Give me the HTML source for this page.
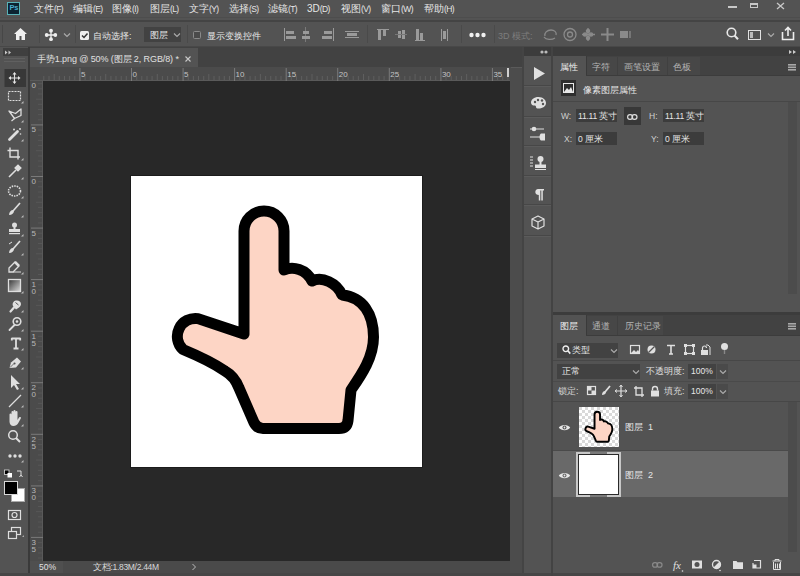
<!DOCTYPE html>
<html><head><meta charset="utf-8">
<style>
*{margin:0;padding:0;box-sizing:border-box}
html,body{width:800px;height:576px;overflow:hidden;background:#535353;font-family:"Liberation Sans",sans-serif;color:#e8e8e8}
.a{position:absolute}
.m{font-size:10.5px;line-height:13px;color:#e8e8e8}
.k{font-size:8.5px;letter-spacing:-0.6px;position:relative;top:-0.5px}
.t{position:absolute;white-space:nowrap;font-size:10px;line-height:12px;color:#e6e6e6}
</style></head><body>
<!-- menu bar -->
<div class="a" style="left:0;top:0;width:800px;height:18px;background:#535353"></div>
<div class="a" style="left:0;top:17px;width:800px;height:1px;background:#4d4d4d"></div>
<div class="a" style="left:0;top:20px;width:800px;height:2px;background:#444"></div>
<!-- menu content -->
<div class="a" style="left:7px;top:2px;width:13px;height:12.5px;background:#0c2331;border:1.5px solid #58b2b8"></div>
<div class="t" style="left:9.5px;top:2.5px;font-size:7.5px;line-height:10px;font-weight:bold;color:#4aaed0;letter-spacing:-0.3px">Ps</div>
<div class="t m" style="left:34px;top:3px">文件<span class="k">(F)</span></div>
<div class="t m" style="left:73px;top:3px">编辑<span class="k">(E)</span></div>
<div class="t m" style="left:112px;top:3px">图像<span class="k">(I)</span></div>
<div class="t m" style="left:150px;top:3px">图层<span class="k">(L)</span></div>
<div class="t m" style="left:189px;top:3px">文字<span class="k">(Y)</span></div>
<div class="t m" style="left:229px;top:3px">选择<span class="k">(S)</span></div>
<div class="t m" style="left:268px;top:3px">滤镜<span class="k">(T)</span></div>
<div class="t m" style="left:307px;top:3px"><span style="font-size:10px">3D</span><span class="k">(D)</span></div>
<div class="t m" style="left:341px;top:3px">视图<span class="k">(V)</span></div>
<div class="t m" style="left:381px;top:3px">窗口<span class="k">(W)</span></div>
<div class="t m" style="left:424px;top:3px">帮助<span class="k">(H)</span></div>
<div class="a" style="left:728px;top:6px;width:9px;height:2px;background:#c8c8c8"></div>
<div class="a" style="left:750px;top:2.5px;width:8px;height:5.5px;border:1.3px solid #c8c8c8;border-top-width:2px"></div>
<svg class="a" style="left:776px;top:1.5px" width="9" height="8"><path d="M1 1L8 7M8 1L1 7" stroke="#c8c8c8" stroke-width="1.3"/></svg>
<!-- options bar -->
<div class="a" style="left:0;top:22px;width:800px;height:24px;background:#535353"></div>
<div class="a" style="left:0;top:46px;width:800px;height:1px;background:#484848"></div>
<!-- options content -->
<div class="a" style="left:2px;top:25px;width:1px;height:18px;background:#474747"></div>
<svg class="a" style="left:13px;top:27px" width="16" height="14"><path d="M7.5 1L1 7h2v6h3.5v-4h2v4H12V7h2z" fill="#f0f0f0"/></svg>
<div class="a" style="left:39px;top:25px;width:1px;height:18px;background:#4a4a4a"></div>
<svg class="a" style="left:44px;top:27.5px" width="14" height="14"><path d="M7 3v8M3 7h8" stroke="#eee" stroke-width="1.3"/><circle cx="7" cy="2.7" r="1.9" fill="#eee"/><circle cx="7" cy="11.2" r="1.9" fill="#eee"/><circle cx="2.7" cy="7" r="1.9" fill="#eee"/><circle cx="11.3" cy="7" r="1.9" fill="#eee"/></svg>
<svg class="a" style="left:63px;top:32px" width="8" height="6"><path d="M1 1.5l3 3 3-3" stroke="#aaa" stroke-width="1.2" fill="none"/></svg>
<div class="a" style="left:75px;top:25px;width:1px;height:18px;background:#4a4a4a"></div>
<div class="a" style="left:80px;top:31px;width:9px;height:9px;background:#eee;border-radius:1.5px"></div>
<svg class="a" style="left:80px;top:31px" width="9" height="9"><path d="M2 4.5l2 2 3.5-4" stroke="#333" stroke-width="1.5" fill="none"/></svg>
<div class="t" style="left:93px;top:30px;font-size:9px;line-height:12px">自动选择:</div>
<div class="a" style="left:144px;top:27px;width:37px;height:15px;background:#424242"></div>
<div class="t" style="left:150px;top:29px;font-size:9px;line-height:12px">图层</div>
<svg class="a" style="left:173px;top:32px" width="8" height="6"><path d="M1 1.5l3 3 3-3" stroke="#aaa" stroke-width="1.2" fill="none"/></svg>
<div class="a" style="left:187px;top:25px;width:1px;height:18px;background:#4a4a4a"></div>
<div class="a" style="left:193px;top:31px;width:8px;height:8px;border:1px solid #8a8a8a;border-radius:1.5px;background:#4a4a4a"></div>
<div class="t" style="left:207px;top:30px;font-size:9px;line-height:12px">显示变换控件</div>
<svg class="a" style="left:282px;top:27px" width="110" height="15" fill="#9a9a9a">
<rect x="2" y="1" width="1" height="13"/><rect x="4" y="4" width="8" height="3"/><rect x="4" y="9" width="10" height="3"/>
<rect x="23" y="0" width="1" height="15" fill="#7a7a7a"/><rect x="21" y="4" width="6" height="3"/><rect x="20" y="9" width="8" height="3"/>
<rect x="51" y="1" width="1" height="13"/><rect x="42" y="4" width="8" height="3"/><rect x="40" y="9" width="10" height="3"/>
<rect x="63" y="4" width="14" height="1"/><rect x="65" y="6" width="10" height="3"/><rect x="63" y="10" width="14" height="1"/>
<rect x="95" y="2" width="12" height="1"/><rect x="96" y="3" width="3" height="10"/><rect x="101" y="3" width="3" height="6"/>
</svg>
<div class="a" style="left:367px;top:25px;width:1px;height:18px;background:#4a4a4a"></div>
<svg class="a" style="left:395px;top:27px" width="60" height="15" fill="#9a9a9a">
<rect x="3" y="4" width="3" height="7"/><rect x="7" y="3" width="3" height="9"/><rect x="0" y="7" width="12" height="1" fill="#777"/>
<rect x="21" y="2" width="3" height="11"/><rect x="25" y="6" width="3" height="7"/><rect x="20" y="13" width="10" height="1"/>
<rect x="46" y="2" width="1" height="12"/><rect x="52" y="2" width="1" height="12"/><rect x="48" y="4" width="3" height="8"/>
</svg>
<div class="a" style="left:461px;top:25px;width:1px;height:18px;background:#4a4a4a"></div>
<svg class="a" style="left:469px;top:32px" width="17" height="6" fill="#f0f0f0"><circle cx="2.5" cy="3" r="2.2"/><circle cx="8.5" cy="3" r="2.2"/><circle cx="14.5" cy="3" r="2.2"/></svg>
<div class="a" style="left:494px;top:25px;width:1px;height:18px;background:#4a4a4a"></div>
<div class="t" style="left:498px;top:30px;font-size:9px;line-height:12px;color:#7d7d7d">3D 模式:</div>
<svg class="a" style="left:542px;top:27px" width="95" height="15" fill="none" stroke="#8a8a8a" stroke-width="1.3">
<path d="M3 9c-1-3 2-6 6-6 3 0 6 2 5 5M2 10c2 3 8 3 11 1"/>
<circle cx="28" cy="7.5" r="6"/><circle cx="28" cy="7.5" r="2.5"/>
<path d="M46 1v13M40 7.5h13"/><circle cx="46" cy="4" r="1.6" fill="#8a8a8a"/><circle cx="46" cy="11" r="1.6" fill="#8a8a8a"/><circle cx="43" cy="7.5" r="1.6" fill="#8a8a8a"/><circle cx="49" cy="7.5" r="1.6" fill="#8a8a8a"/>
<path d="M59 7.5h13M65.5 1v13" stroke-width="2"/>
<rect x="78" y="4" width="8" height="7" fill="#8a8a8a" stroke="none"/><path d="M88 4v7"/>
</svg>
<svg class="a" style="left:726px;top:27px" width="13" height="14"><circle cx="5.5" cy="5.5" r="4.3" stroke="#e8e8e8" stroke-width="1.6" fill="none"/><path d="M8.5 8.5l3.5 3.7" stroke="#e8e8e8" stroke-width="2"/></svg>
<div class="a" style="left:748px;top:30px;width:13px;height:10px;border:1.5px solid #e0e0e0"></div>
<div class="a" style="left:750px;top:32px;width:3px;height:6px;background:#bbb"></div>
<svg class="a" style="left:767px;top:32px" width="8" height="6"><path d="M1 1.5l3 3 3-3" stroke="#aaa" stroke-width="1.2" fill="none"/></svg>
<svg class="a" style="left:781px;top:26px" width="14" height="15"><path d="M1.5 6v7.5h11V6" stroke="#eee" stroke-width="1.6" fill="none"/><path d="M7 10V2M4 4.5L7 1.5l3 3" stroke="#eee" stroke-width="1.6" fill="none"/></svg>
<!-- dark strip / tab bar -->
<div class="a" style="left:0;top:47px;width:800px;height:9px;background:#3c3c3c"></div>
<!-- toolbar -->
<div class="a" style="left:0;top:47px;width:29px;height:529px;background:#535353"></div>
<div class="a" style="left:3px;top:48px;width:25px;height:8px;background:#3f3f3f"></div>
<svg class="a" style="left:0;top:47px" width="28" height="529">
<g transform="translate(0,-47)" fill="none" stroke="#dedede" stroke-width="1.2">
<path d="M5 50.5l2.5 2-2.5 2zM8.5 50.5l2.5 2-2.5 2z" fill="#c8c8c8" stroke="none"/>
<rect x="4" y="58" width="21" height="1" fill="#606060" stroke="none"/>
<rect x="4" y="61" width="21" height="1" fill="#606060" stroke="none"/>
<rect x="4.5" y="69" width="21.5" height="18" fill="#383838" stroke="none"/>
<!-- move -->
<path d="M14.5 74v8M10.5 78h8" stroke-width="1.1"/>
<path d="M14.5 72l2 2.5h-4zM14.5 84l2-2.5h-4zM8.5 78l2.5 2v-4zM20.5 78l-2.5 2v-4z" fill="#e8e8e8" stroke="none"/>
<!-- marquee -->
<rect x="8.5" y="91.5" width="12" height="9" stroke-dasharray="2 1"/>
<!-- lasso -->
<path d="M9 111l6.5 2.5 5.5-4.5v6.5l-6.5 3-5.5-7.5z" stroke-width="1.3" stroke-linejoin="round"/><path d="M14.5 118.5l-3 2.5" stroke-width="1.2"/>
<!-- wand -->
<path d="M9.5 139.5l8-8" stroke-width="2.8" stroke-linecap="round"/><circle cx="14" cy="129.5" r="1" fill="#dedede" stroke="none"/><circle cx="20" cy="129" r="1" fill="#dedede" stroke="none"/><circle cx="20.5" cy="134" r="0.8" fill="#dedede" stroke="none"/>
<!-- crop -->
<path d="M10 147.5v9.5h10M7.5 150.5h10.5v9" stroke-width="1.4"/>
<!-- eyedropper -->
<path d="M9 177l7-7" stroke-width="1.6"/><path d="M15 168l3-3 3 3-3 3z" fill="#dedede"/>
<!-- healing -->
<ellipse cx="14.5" cy="191" rx="6" ry="5" stroke-width="1.6" stroke-dasharray="1.5 1"/>
<!-- brush -->
<path d="M20 203l-7 8" stroke-width="1.6"/><path d="M13 210c-2 0-4 2-4 5 3 0 5-2 5-4z" fill="#dedede" stroke="none"/>
<!-- stamp -->
<circle cx="14.5" cy="225" r="2.5" fill="#dedede" stroke="none"/><rect x="13.5" y="226" width="2" height="4" fill="#dedede" stroke="none"/><rect x="9" y="229" width="11" height="3" fill="#dedede" stroke="none"/><rect x="9" y="233" width="11" height="1.2" fill="#dedede" stroke="none"/>
<!-- history brush -->
<path d="M20 241l-7 8" stroke-width="1.6"/><path d="M13 248c-2 0-4 2-4 5 3 0 5-2 5-4z" fill="#dedede" stroke="none"/><path d="M9 244l3-2" stroke-width="1"/>
<!-- eraser -->
<path d="M9 268l6-6 4 4-6 6h-4z" stroke-width="1.3"/><path d="M15 262l4 4" stroke-width="2.5"/><path d="M13 272h8" stroke-width="1"/>
<!-- gradient -->
<defs><linearGradient id="gg" x1="0" x2="1" y1="0" y2="1"><stop offset="0" stop-color="#333"/><stop offset="1" stop-color="#ddd"/></linearGradient></defs>
<rect x="8.5" y="279.5" width="12" height="12" fill="url(#gg)" stroke-width="1.3"/>
<!-- smudge -->
<path d="M10.5 311.5l3.5-4" stroke-width="2.2" stroke-linecap="round"/><path d="M13 306c-1-2 0-5 3-5.5 2.5-.5 5 1 5 3.5 0 1.5-1 2.5-2 3.5l-3 2z" fill="#dedede" stroke="none"/><path d="M15.5 302.5l3 2.5" stroke="#535353" stroke-width="1"/>
<!-- dodge -->
<circle cx="17" cy="321.5" r="3.8" stroke-width="1.6"/><circle cx="17" cy="321.5" r="1.3" fill="#dedede" stroke="none"/><path d="M9.5 330l5-5" stroke-width="1.8" stroke-linecap="round"/>
<!-- type -->
<path d="M11.5 338.5h9M16 338.5v10M13.5 348.5h5M11.8 338v2.5M20.2 338v2.5" stroke-width="1.8"/>
<!-- pen -->
<path d="M9.5 368l1.5-5.5 6-5 4 4-5 6z" fill="#dedede" stroke="none"/><circle cx="14.5" cy="363.5" r="1.1" fill="#535353" stroke="none"/><path d="M10 367.5l3.5-3.5" stroke="#535353" stroke-width="0.8"/>
<!-- path select -->
<path d="M11 375v13l3-3 3 5 2-1-3-5h4z" fill="#dedede" stroke="none"/>
<!-- line -->
<path d="M9 407l12-12" stroke-width="1.3"/>
<!-- hand -->
<path d="M9.5 419v-4.5a1 1 0 0 1 2 0V418V412a1 1 0 0 1 2 0v6v-7a1 1 0 0 1 2 0v7v-6a1 1 0 0 1 2 0v8l1.5-2.5a1 1 0 0 1 1.8 1l-2.8 5c-1 1.5-2.5 2.5-4.5 2.5c-2.5 0-4-2-4-4.5z" fill="#dedede" stroke="none"/>
<!-- zoom -->
<circle cx="13" cy="435" r="4.3" stroke-width="1.5"/><path d="M16 438l4 4" stroke-width="2"/>
<!-- more -->
<circle cx="10" cy="456" r="1.7" fill="#dedede" stroke="none"/><circle cx="15" cy="456" r="1.7" fill="#dedede" stroke="none"/><circle cx="20" cy="456" r="1.7" fill="#dedede" stroke="none"/>
<path d="M23.5 101v2.5h-2.5z" fill="#bdbdbd" stroke="none"/><path d="M23.5 120v2.5h-2.5z" fill="#bdbdbd" stroke="none"/><path d="M23.5 139v2.5h-2.5z" fill="#bdbdbd" stroke="none"/><path d="M23.5 158v2.5h-2.5z" fill="#bdbdbd" stroke="none"/><path d="M23.5 177v2.5h-2.5z" fill="#bdbdbd" stroke="none"/><path d="M23.5 196v2.5h-2.5z" fill="#bdbdbd" stroke="none"/><path d="M23.5 215v2.5h-2.5z" fill="#bdbdbd" stroke="none"/><path d="M23.5 234v2.5h-2.5z" fill="#bdbdbd" stroke="none"/><path d="M23.5 253v2.5h-2.5z" fill="#bdbdbd" stroke="none"/><path d="M23.5 272v2.5h-2.5z" fill="#bdbdbd" stroke="none"/><path d="M23.5 291v2.5h-2.5z" fill="#bdbdbd" stroke="none"/><path d="M23.5 310v2.5h-2.5z" fill="#bdbdbd" stroke="none"/><path d="M23.5 329v2.5h-2.5z" fill="#bdbdbd" stroke="none"/><path d="M23.5 348v2.5h-2.5z" fill="#bdbdbd" stroke="none"/><path d="M23.5 367v2.5h-2.5z" fill="#bdbdbd" stroke="none"/><path d="M23.5 387v2.5h-2.5z" fill="#bdbdbd" stroke="none"/><path d="M23.5 405v2.5h-2.5z" fill="#bdbdbd" stroke="none"/><path d="M23.5 424v2.5h-2.5z" fill="#bdbdbd" stroke="none"/><path d="M23.5 460v2.5h-2.5z" fill="#bdbdbd" stroke="none"/>
<!-- default colours -->
<rect x="4.5" y="470" width="4.5" height="4.5" fill="#000" stroke="#ddd" stroke-width="0.8"/><rect x="7.5" y="473" width="4.5" height="4.5" fill="#fff" stroke="none"/>
<path d="M17 471h4v4M19.5 477l1.5-2 1.5 2" stroke-width="1"/>
</g></svg>
<div class="a" style="left:11px;top:488px;width:14px;height:14px;background:#fff;border:1px solid #aaa"></div>
<div class="a" style="left:4px;top:481px;width:14px;height:14px;background:#000;border:1.5px solid #d8d8d8"></div>
<svg class="a" style="left:0;top:505px" width="28" height="40" fill="none" stroke="#dedede" stroke-width="1.2">
<rect x="8.5" y="5.5" width="12" height="9"/><circle cx="14.5" cy="10" r="2.5"/>
<rect x="11.5" y="22.5" width="9" height="7"/><rect x="8.5" y="26.5" width="8" height="7" fill="#535353"/>
<path d="M24 30l-2 2h2z" fill="#aaa" stroke="none"/>
</svg>

<div class="a" style="left:28px;top:47px;width:2px;height:529px;background:#3a3a3a"></div>
<!-- document tab bar -->
<div class="a" style="left:30px;top:47px;width:493px;height:20px;background:#424242"></div>
<div class="a" style="left:30px;top:48px;width:168px;height:20px;background:#535353"></div>
<div class="t" id="tabtxt" style="left:37px;top:53px;font-size:9px;line-height:12px;color:#e0e0e0;letter-spacing:-0.1px">手势1.png @ 50% (图层 2, RGB/8) *</div>
<svg class="a" style="left:184px;top:55px" width="8" height="8"><path d="M1.5 1.5l5 5M6.5 1.5l-5 5" stroke="#c8c8c8" stroke-width="1.1"/></svg>
<!-- rulers -->
<svg class="a" style="left:30px;top:67px" width="481" height="14">
<rect x="0" y="0" width="481" height="14" fill="#4b4b4b"/>
<rect x="0" y="13" width="481" height="1" fill="#5a5a5a"/>
<rect x="13.3" y="9" width="1" height="4" fill="#5f5f5f"/>
<rect x="18.5" y="9" width="1" height="4" fill="#5f5f5f"/>
<rect x="23.7" y="7" width="1" height="6" fill="#5f5f5f"/>
<rect x="28.8" y="9" width="1" height="4" fill="#5f5f5f"/>
<rect x="34.0" y="9" width="1" height="4" fill="#5f5f5f"/>
<rect x="39.1" y="9" width="1" height="4" fill="#5f5f5f"/>
<rect x="44.3" y="9" width="1" height="4" fill="#5f5f5f"/>
<rect x="49.4" y="1" width="1" height="13" fill="#7a7a7a"/>
<text x="50.9" y="10" font-size="8" fill="#c4c4c4" font-family="Liberation Sans">5</text>
<rect x="54.6" y="9" width="1" height="4" fill="#5f5f5f"/>
<rect x="59.8" y="9" width="1" height="4" fill="#5f5f5f"/>
<rect x="64.9" y="9" width="1" height="4" fill="#5f5f5f"/>
<rect x="70.1" y="9" width="1" height="4" fill="#5f5f5f"/>
<rect x="75.2" y="7" width="1" height="6" fill="#5f5f5f"/>
<rect x="80.4" y="9" width="1" height="4" fill="#5f5f5f"/>
<rect x="85.5" y="9" width="1" height="4" fill="#5f5f5f"/>
<rect x="90.7" y="9" width="1" height="4" fill="#5f5f5f"/>
<rect x="95.8" y="9" width="1" height="4" fill="#5f5f5f"/>
<rect x="101.0" y="1" width="1" height="13" fill="#7a7a7a"/>
<text x="102.5" y="10" font-size="8" fill="#c4c4c4" font-family="Liberation Sans">0</text>
<rect x="106.2" y="9" width="1" height="4" fill="#5f5f5f"/>
<rect x="111.3" y="9" width="1" height="4" fill="#5f5f5f"/>
<rect x="116.5" y="9" width="1" height="4" fill="#5f5f5f"/>
<rect x="121.6" y="9" width="1" height="4" fill="#5f5f5f"/>
<rect x="126.8" y="7" width="1" height="6" fill="#5f5f5f"/>
<rect x="131.9" y="9" width="1" height="4" fill="#5f5f5f"/>
<rect x="137.1" y="9" width="1" height="4" fill="#5f5f5f"/>
<rect x="142.2" y="9" width="1" height="4" fill="#5f5f5f"/>
<rect x="147.4" y="9" width="1" height="4" fill="#5f5f5f"/>
<rect x="152.6" y="1" width="1" height="13" fill="#7a7a7a"/>
<text x="154.1" y="10" font-size="8" fill="#c4c4c4" font-family="Liberation Sans">5</text>
<rect x="157.7" y="9" width="1" height="4" fill="#5f5f5f"/>
<rect x="162.9" y="9" width="1" height="4" fill="#5f5f5f"/>
<rect x="168.0" y="9" width="1" height="4" fill="#5f5f5f"/>
<rect x="173.2" y="9" width="1" height="4" fill="#5f5f5f"/>
<rect x="178.3" y="7" width="1" height="6" fill="#5f5f5f"/>
<rect x="183.5" y="9" width="1" height="4" fill="#5f5f5f"/>
<rect x="188.7" y="9" width="1" height="4" fill="#5f5f5f"/>
<rect x="193.8" y="9" width="1" height="4" fill="#5f5f5f"/>
<rect x="199.0" y="9" width="1" height="4" fill="#5f5f5f"/>
<rect x="204.1" y="1" width="1" height="13" fill="#7a7a7a"/>
<text x="205.6" y="10" font-size="8" fill="#c4c4c4" font-family="Liberation Sans">10</text>
<rect x="209.3" y="9" width="1" height="4" fill="#5f5f5f"/>
<rect x="214.4" y="9" width="1" height="4" fill="#5f5f5f"/>
<rect x="219.6" y="9" width="1" height="4" fill="#5f5f5f"/>
<rect x="224.7" y="9" width="1" height="4" fill="#5f5f5f"/>
<rect x="229.9" y="7" width="1" height="6" fill="#5f5f5f"/>
<rect x="235.1" y="9" width="1" height="4" fill="#5f5f5f"/>
<rect x="240.2" y="9" width="1" height="4" fill="#5f5f5f"/>
<rect x="245.4" y="9" width="1" height="4" fill="#5f5f5f"/>
<rect x="250.5" y="9" width="1" height="4" fill="#5f5f5f"/>
<rect x="255.7" y="1" width="1" height="13" fill="#7a7a7a"/>
<text x="257.2" y="10" font-size="8" fill="#c4c4c4" font-family="Liberation Sans">15</text>
<rect x="260.8" y="9" width="1" height="4" fill="#5f5f5f"/>
<rect x="266.0" y="9" width="1" height="4" fill="#5f5f5f"/>
<rect x="271.1" y="9" width="1" height="4" fill="#5f5f5f"/>
<rect x="276.3" y="9" width="1" height="4" fill="#5f5f5f"/>
<rect x="281.5" y="7" width="1" height="6" fill="#5f5f5f"/>
<rect x="286.6" y="9" width="1" height="4" fill="#5f5f5f"/>
<rect x="291.8" y="9" width="1" height="4" fill="#5f5f5f"/>
<rect x="296.9" y="9" width="1" height="4" fill="#5f5f5f"/>
<rect x="302.1" y="9" width="1" height="4" fill="#5f5f5f"/>
<rect x="307.2" y="1" width="1" height="13" fill="#7a7a7a"/>
<text x="308.7" y="10" font-size="8" fill="#c4c4c4" font-family="Liberation Sans">20</text>
<rect x="312.4" y="9" width="1" height="4" fill="#5f5f5f"/>
<rect x="317.6" y="9" width="1" height="4" fill="#5f5f5f"/>
<rect x="322.7" y="9" width="1" height="4" fill="#5f5f5f"/>
<rect x="327.9" y="9" width="1" height="4" fill="#5f5f5f"/>
<rect x="333.0" y="7" width="1" height="6" fill="#5f5f5f"/>
<rect x="338.2" y="9" width="1" height="4" fill="#5f5f5f"/>
<rect x="343.3" y="9" width="1" height="4" fill="#5f5f5f"/>
<rect x="348.5" y="9" width="1" height="4" fill="#5f5f5f"/>
<rect x="353.6" y="9" width="1" height="4" fill="#5f5f5f"/>
<rect x="358.8" y="1" width="1" height="13" fill="#7a7a7a"/>
<text x="360.3" y="10" font-size="8" fill="#c4c4c4" font-family="Liberation Sans">25</text>
<rect x="364.0" y="9" width="1" height="4" fill="#5f5f5f"/>
<rect x="369.1" y="9" width="1" height="4" fill="#5f5f5f"/>
<rect x="374.3" y="9" width="1" height="4" fill="#5f5f5f"/>
<rect x="379.4" y="9" width="1" height="4" fill="#5f5f5f"/>
<rect x="384.6" y="7" width="1" height="6" fill="#5f5f5f"/>
<rect x="389.7" y="9" width="1" height="4" fill="#5f5f5f"/>
<rect x="394.9" y="9" width="1" height="4" fill="#5f5f5f"/>
<rect x="400.0" y="9" width="1" height="4" fill="#5f5f5f"/>
<rect x="405.2" y="9" width="1" height="4" fill="#5f5f5f"/>
<rect x="410.4" y="1" width="1" height="13" fill="#7a7a7a"/>
<text x="411.9" y="10" font-size="8" fill="#c4c4c4" font-family="Liberation Sans">30</text>
<rect x="415.5" y="9" width="1" height="4" fill="#5f5f5f"/>
<rect x="420.7" y="9" width="1" height="4" fill="#5f5f5f"/>
<rect x="425.8" y="9" width="1" height="4" fill="#5f5f5f"/>
<rect x="431.0" y="9" width="1" height="4" fill="#5f5f5f"/>
<rect x="436.1" y="7" width="1" height="6" fill="#5f5f5f"/>
<rect x="441.3" y="9" width="1" height="4" fill="#5f5f5f"/>
<rect x="446.5" y="9" width="1" height="4" fill="#5f5f5f"/>
<rect x="451.6" y="9" width="1" height="4" fill="#5f5f5f"/>
<rect x="456.8" y="9" width="1" height="4" fill="#5f5f5f"/>
<rect x="461.9" y="1" width="1" height="13" fill="#7a7a7a"/>
<text x="463.4" y="10" font-size="8" fill="#c4c4c4" font-family="Liberation Sans">35</text>
<rect x="467.1" y="9" width="1" height="4" fill="#5f5f5f"/>
<rect x="472.2" y="9" width="1" height="4" fill="#5f5f5f"/>
<rect x="477.4" y="9" width="1" height="4" fill="#5f5f5f"/>
<rect x="477" y="1" width="2" height="9" fill="#d0d0d0"/>
</svg>
<svg class="a" style="left:30px;top:81px" width="13" height="480">
<rect x="0" y="0" width="13" height="480" fill="#4b4b4b"/>
<rect x="12" y="0" width="1" height="480" fill="#5a5a5a"/>
<text x="1.5" y="-0.1" font-size="8" fill="#b8b8b8" font-family="Liberation Sans">1</text>
<text x="1.5" y="6.9" font-size="8" fill="#b8b8b8" font-family="Liberation Sans">0</text>
<rect x="8" y="2.2" width="4" height="1" fill="#575757"/>
<rect x="8" y="7.3" width="4" height="1" fill="#575757"/>
<rect x="8" y="12.5" width="4" height="1" fill="#575757"/>
<rect x="6" y="17.7" width="6" height="1" fill="#575757"/>
<rect x="8" y="22.8" width="4" height="1" fill="#575757"/>
<rect x="8" y="28.0" width="4" height="1" fill="#575757"/>
<rect x="8" y="33.1" width="4" height="1" fill="#575757"/>
<rect x="8" y="38.3" width="4" height="1" fill="#575757"/>
<rect x="1" y="43.4" width="12" height="1" fill="#7a7a7a"/>
<text x="1.5" y="51.4" font-size="8" fill="#b8b8b8" font-family="Liberation Sans">5</text>
<rect x="8" y="48.6" width="4" height="1" fill="#575757"/>
<rect x="8" y="53.8" width="4" height="1" fill="#575757"/>
<rect x="8" y="58.9" width="4" height="1" fill="#575757"/>
<rect x="8" y="64.1" width="4" height="1" fill="#575757"/>
<rect x="6" y="69.2" width="6" height="1" fill="#575757"/>
<rect x="8" y="74.4" width="4" height="1" fill="#575757"/>
<rect x="8" y="79.5" width="4" height="1" fill="#575757"/>
<rect x="8" y="84.7" width="4" height="1" fill="#575757"/>
<rect x="8" y="89.8" width="4" height="1" fill="#575757"/>
<rect x="1" y="95.0" width="12" height="1" fill="#7a7a7a"/>
<text x="1.5" y="103.0" font-size="8" fill="#b8b8b8" font-family="Liberation Sans">0</text>
<rect x="8" y="100.2" width="4" height="1" fill="#575757"/>
<rect x="8" y="105.3" width="4" height="1" fill="#575757"/>
<rect x="8" y="110.5" width="4" height="1" fill="#575757"/>
<rect x="8" y="115.6" width="4" height="1" fill="#575757"/>
<rect x="6" y="120.8" width="6" height="1" fill="#575757"/>
<rect x="8" y="125.9" width="4" height="1" fill="#575757"/>
<rect x="8" y="131.1" width="4" height="1" fill="#575757"/>
<rect x="8" y="136.2" width="4" height="1" fill="#575757"/>
<rect x="8" y="141.4" width="4" height="1" fill="#575757"/>
<rect x="1" y="146.6" width="12" height="1" fill="#7a7a7a"/>
<text x="1.5" y="154.6" font-size="8" fill="#b8b8b8" font-family="Liberation Sans">5</text>
<rect x="8" y="151.7" width="4" height="1" fill="#575757"/>
<rect x="8" y="156.9" width="4" height="1" fill="#575757"/>
<rect x="8" y="162.0" width="4" height="1" fill="#575757"/>
<rect x="8" y="167.2" width="4" height="1" fill="#575757"/>
<rect x="6" y="172.3" width="6" height="1" fill="#575757"/>
<rect x="8" y="177.5" width="4" height="1" fill="#575757"/>
<rect x="8" y="182.7" width="4" height="1" fill="#575757"/>
<rect x="8" y="187.8" width="4" height="1" fill="#575757"/>
<rect x="8" y="193.0" width="4" height="1" fill="#575757"/>
<rect x="1" y="198.1" width="12" height="1" fill="#7a7a7a"/>
<text x="1.5" y="206.1" font-size="8" fill="#b8b8b8" font-family="Liberation Sans">1</text>
<text x="1.5" y="213.1" font-size="8" fill="#b8b8b8" font-family="Liberation Sans">0</text>
<rect x="8" y="203.3" width="4" height="1" fill="#575757"/>
<rect x="8" y="208.4" width="4" height="1" fill="#575757"/>
<rect x="8" y="213.6" width="4" height="1" fill="#575757"/>
<rect x="8" y="218.7" width="4" height="1" fill="#575757"/>
<rect x="6" y="223.9" width="6" height="1" fill="#575757"/>
<rect x="8" y="229.1" width="4" height="1" fill="#575757"/>
<rect x="8" y="234.2" width="4" height="1" fill="#575757"/>
<rect x="8" y="239.4" width="4" height="1" fill="#575757"/>
<rect x="8" y="244.5" width="4" height="1" fill="#575757"/>
<rect x="1" y="249.7" width="12" height="1" fill="#7a7a7a"/>
<text x="1.5" y="257.7" font-size="8" fill="#b8b8b8" font-family="Liberation Sans">1</text>
<text x="1.5" y="264.7" font-size="8" fill="#b8b8b8" font-family="Liberation Sans">5</text>
<rect x="8" y="254.8" width="4" height="1" fill="#575757"/>
<rect x="8" y="260.0" width="4" height="1" fill="#575757"/>
<rect x="8" y="265.1" width="4" height="1" fill="#575757"/>
<rect x="8" y="270.3" width="4" height="1" fill="#575757"/>
<rect x="6" y="275.5" width="6" height="1" fill="#575757"/>
<rect x="8" y="280.6" width="4" height="1" fill="#575757"/>
<rect x="8" y="285.8" width="4" height="1" fill="#575757"/>
<rect x="8" y="290.9" width="4" height="1" fill="#575757"/>
<rect x="8" y="296.1" width="4" height="1" fill="#575757"/>
<rect x="1" y="301.2" width="12" height="1" fill="#7a7a7a"/>
<text x="1.5" y="309.2" font-size="8" fill="#b8b8b8" font-family="Liberation Sans">2</text>
<text x="1.5" y="316.2" font-size="8" fill="#b8b8b8" font-family="Liberation Sans">0</text>
<rect x="8" y="306.4" width="4" height="1" fill="#575757"/>
<rect x="8" y="311.6" width="4" height="1" fill="#575757"/>
<rect x="8" y="316.7" width="4" height="1" fill="#575757"/>
<rect x="8" y="321.9" width="4" height="1" fill="#575757"/>
<rect x="6" y="327.0" width="6" height="1" fill="#575757"/>
<rect x="8" y="332.2" width="4" height="1" fill="#575757"/>
<rect x="8" y="337.3" width="4" height="1" fill="#575757"/>
<rect x="8" y="342.5" width="4" height="1" fill="#575757"/>
<rect x="8" y="347.6" width="4" height="1" fill="#575757"/>
<rect x="1" y="352.8" width="12" height="1" fill="#7a7a7a"/>
<text x="1.5" y="360.8" font-size="8" fill="#b8b8b8" font-family="Liberation Sans">2</text>
<text x="1.5" y="367.8" font-size="8" fill="#b8b8b8" font-family="Liberation Sans">5</text>
<rect x="8" y="358.0" width="4" height="1" fill="#575757"/>
<rect x="8" y="363.1" width="4" height="1" fill="#575757"/>
<rect x="8" y="368.3" width="4" height="1" fill="#575757"/>
<rect x="8" y="373.4" width="4" height="1" fill="#575757"/>
<rect x="6" y="378.6" width="6" height="1" fill="#575757"/>
<rect x="8" y="383.7" width="4" height="1" fill="#575757"/>
<rect x="8" y="388.9" width="4" height="1" fill="#575757"/>
<rect x="8" y="394.0" width="4" height="1" fill="#575757"/>
<rect x="8" y="399.2" width="4" height="1" fill="#575757"/>
<rect x="1" y="404.4" width="12" height="1" fill="#7a7a7a"/>
<text x="1.5" y="412.4" font-size="8" fill="#b8b8b8" font-family="Liberation Sans">3</text>
<text x="1.5" y="419.4" font-size="8" fill="#b8b8b8" font-family="Liberation Sans">0</text>
<rect x="8" y="409.5" width="4" height="1" fill="#575757"/>
<rect x="8" y="414.7" width="4" height="1" fill="#575757"/>
<rect x="8" y="419.8" width="4" height="1" fill="#575757"/>
<rect x="8" y="425.0" width="4" height="1" fill="#575757"/>
<rect x="6" y="430.1" width="6" height="1" fill="#575757"/>
<rect x="8" y="435.3" width="4" height="1" fill="#575757"/>
<rect x="8" y="440.5" width="4" height="1" fill="#575757"/>
<rect x="8" y="445.6" width="4" height="1" fill="#575757"/>
<rect x="8" y="450.8" width="4" height="1" fill="#575757"/>
<rect x="1" y="455.9" width="12" height="1" fill="#7a7a7a"/>
<text x="1.5" y="463.9" font-size="8" fill="#b8b8b8" font-family="Liberation Sans">3</text>
<text x="1.5" y="470.9" font-size="8" fill="#b8b8b8" font-family="Liberation Sans">5</text>
<rect x="8" y="461.1" width="4" height="1" fill="#575757"/>
<rect x="8" y="466.2" width="4" height="1" fill="#575757"/>
<rect x="8" y="471.4" width="4" height="1" fill="#575757"/>
<rect x="8" y="476.5" width="4" height="1" fill="#575757"/>
</svg>
<!-- canvas -->
<div class="a" style="left:43px;top:81px;width:467px;height:480px;background:#282828"></div>
<div class="a" style="left:131px;top:176px;width:291px;height:291px;background:#fff;box-shadow:0 0 0 1px #1c1c1c"></div>
<svg class="a" style="left:131px;top:176px" width="291" height="291" viewBox="131 176 291 291">
<path id="hand" d="M244 334L244 231A20 20 0 0 1 284 231L284 270C293 266 306 269 312 281C322 276 337 283 342 295C363 297 373.5 314 373.5 337C373.5 357 362 374 351 390L348 420.5Q347 428.5 339 428.5L263 428.5Q257 428.5 254 422.5L239 388C236 380 232 375 225 371C212 362 195 354.5 183 349.5A18 18 0 0 1 198 318.6Z" fill="#fdd5c5" stroke="#000" stroke-width="11" stroke-linejoin="round"/>
</svg>
<!-- scroll track -->
<div class="a" style="left:510px;top:67px;width:12px;height:506px;background:#4c4c4c"></div><div class="a" style="left:511px;top:67px;width:11px;height:1px;background:#5a5a5a"></div>
<div class="a" style="left:522px;top:47px;width:2px;height:529px;background:#444"></div>
<!-- status bar -->
<div class="a" style="left:30px;top:561px;width:480px;height:12px;background:#4a4a4a"></div>
<div class="a" style="left:0;top:573px;width:800px;height:3px;background:#464646"></div>
<div class="a" style="left:30px;top:561px;width:33px;height:12px;background:#4f4f4f"></div>
<div class="t" style="left:39px;top:562px;font-size:8.5px;line-height:11px;color:#e0e0e0">50%</div>
<div class="t" style="left:93px;top:562px;font-size:8.5px;line-height:11px;color:#d8d8d8;letter-spacing:-0.3px">文档:1.83M/2.44M</div>
<svg class="a" style="left:191px;top:563px" width="6" height="8"><path d="M1.5 1l3 3-3 3" stroke="#bbb" stroke-width="1" fill="none"/></svg>
<!-- icon column -->
<div class="a" style="left:524px;top:56px;width:27px;height:517px;background:#535353"></div>
<div class="a" style="left:551px;top:47px;width:2px;height:529px;background:#434343"></div>
<svg class="a" style="left:523px;top:47px" width="30" height="200">
<g transform="translate(-523,-47)">
<circle cx="542" cy="52" r="1.6" fill="#bbb"/><circle cx="546" cy="52" r="1.6" fill="#bbb"/>
<rect x="524" y="85" width="27" height="1" fill="#474747"/><rect x="524" y="86" width="27" height="1" fill="#5b5b5b"/>
<rect x="524" y="116" width="27" height="1" fill="#474747"/><rect x="524" y="117" width="27" height="1" fill="#5b5b5b"/>
<rect x="524" y="145" width="27" height="1" fill="#474747"/><rect x="524" y="146" width="27" height="1" fill="#5b5b5b"/>
<rect x="524" y="175" width="27" height="1" fill="#474747"/><rect x="524" y="176" width="27" height="1" fill="#5b5b5b"/>
<rect x="524" y="204" width="27" height="1" fill="#474747"/><rect x="524" y="205" width="27" height="1" fill="#5b5b5b"/>
<rect x="524" y="235" width="27" height="1" fill="#474747"/><rect x="524" y="236" width="27" height="1" fill="#5b5b5b"/>
<!-- play -->
<path d="M534 67v13l11-6.5z" fill="#e0e0e0"/>
<!-- palette -->
<path d="M538.5 97c-4.5 0-7.5 2.5-7.5 5.5 0 2.5 2 3 3.5 3 1 0 1.5.5 1.5 1.5 0 1 1 1.5 2.5 1.5 4.5 0 7.5-2.5 7.5-5.5s-3-6-7.5-6z" fill="#e0e0e0"/>
<circle cx="535" cy="102" r="1.2" fill="#535353"/><circle cx="538" cy="100" r="1.2" fill="#535353"/><circle cx="542" cy="100.5" r="1.2" fill="#535353"/><circle cx="543" cy="104" r="1.2" fill="#535353"/>
<!-- adjustments -->
<path d="M530 129h14M530 137h14" stroke="#e0e0e0" stroke-width="1.2"/>
<circle cx="534" cy="129" r="2.3" fill="#e0e0e0"/><path d="M541 133.5l4 0 0 7-4 0c-2-1-2-6 0-7z" fill="#e0e0e0"/>
<!-- clone source -->
<path d="M530 157h3M530 160h3M530 163h3M530 166h3" stroke="#e0e0e0" stroke-width="1"/>
<circle cx="540.5" cy="159" r="3" fill="#e0e0e0"/><rect x="539.5" y="161" width="2" height="4" fill="#e0e0e0"/><rect x="535" y="164.5" width="11" height="3.5" fill="#e0e0e0"/><rect x="535" y="169" width="11" height="1" fill="#e0e0e0"/>
<!-- paragraph -->
<path d="M538 189h6v1.5h-1.2v10h-1.5v-10h-1v10h-1.5v-5.5c-2 0-3.5-1-3.5-3s1.5-3 2.7-3z" fill="#e0e0e0"/>
<!-- cube -->
<path d="M538 216l6 3v7l-6 3-6-3v-7z M532 219l6 3 6-3M538 222v7" stroke="#e0e0e0" stroke-width="1.2" fill="none" stroke-linejoin="round"/>
</g></svg>
<!-- properties panel -->
<div class="a" style="left:553px;top:56px;width:247px;height:20px;background:#424242"></div>
<div class="a" style="left:553px;top:56px;width:33px;height:20px;background:#535353"></div>
<div class="a" style="left:553px;top:76px;width:247px;height:236px;background:#535353"></div>
<div class="a" style="left:553px;top:312px;width:247px;height:3px;background:#3c3c3c"></div>
<!-- properties content -->
<svg class="a" style="left:788px;top:49px" width="9" height="6"><path d="M1 1l3 2-3 2zM5 1l3 2-3 2z" fill="#ccc"/></svg>
<div class="a" style="left:587px;top:57px;width:113px;height:18px;background:#474747"></div>
<div class="a" style="left:586px;top:56px;width:1px;height:20px;background:#3a3a3a"></div>
<div class="a" style="left:617px;top:57px;width:1px;height:18px;background:#404040"></div>
<div class="a" style="left:667px;top:57px;width:1px;height:18px;background:#404040"></div>
<div class="a" style="left:553px;top:75px;width:247px;height:1px;background:#3c3c3c"></div>
<div class="a" style="left:553px;top:56px;width:33px;height:20px;background:#535353"></div>
<div class="t" style="left:560px;top:61px;font-size:9px;line-height:12px;color:#efefef">属性</div>
<div class="t" style="left:592px;top:61px;font-size:9px;line-height:12px;color:#b4b4b4">字符</div>
<div class="t" style="left:624px;top:61px;font-size:9px;line-height:12px;color:#b4b4b4">画笔设置</div>
<div class="t" style="left:673px;top:61px;font-size:9px;line-height:12px;color:#b4b4b4">色板</div>
<svg class="a" style="left:788px;top:64px" width="10" height="8" fill="#a8a8a8"><rect x="0" y="0" width="8" height="1.6"/><rect x="0" y="2.5" width="8" height="1.6"/><rect x="0" y="5" width="8" height="1.6"/></svg>
<div class="a" style="left:561px;top:80px;width:15px;height:16px;background:#2e2e2e"></div>
<div class="a" style="left:563px;top:83px;width:11px;height:10px;border:1.2px solid #e8e8e8"></div>
<svg class="a" style="left:564px;top:85px" width="9" height="7"><path d="M0 7l3-4 2 2 2-3 2 5z" fill="#e8e8e8"/></svg>
<div class="t" style="left:583px;top:84px;font-size:9px;line-height:12px;color:#e6e6e6">像素图层属性</div>
<div class="a" style="left:553px;top:101px;width:247px;height:1px;background:#474747"></div>
<div class="a" style="left:788px;top:102px;width:9px;height:192px;background:#4c4c4c"></div>
<div class="t" style="left:561px;top:111px;font-size:8.5px;line-height:11px;color:#cfcfcf">W:</div>
<div class="a" style="left:576px;top:109px;width:41px;height:13px;background:#3c3c3c"></div>
<div class="t" style="left:578px;top:111px;width:39px;overflow:hidden;font-size:8.5px;line-height:11px;color:#e6e6e6;letter-spacing:-0.2px">11.11 英寸</div>
<div class="a" style="left:624px;top:107px;width:17px;height:18px;background:#383838"></div>
<svg class="a" style="left:627px;top:113.5px" width="11" height="6"><rect x="0.6" y="0.6" width="5" height="4.8" rx="2.4" stroke="#ddd" stroke-width="1.2" fill="none"/><rect x="5" y="0.6" width="5" height="4.8" rx="2.4" stroke="#ddd" stroke-width="1.2" fill="none"/></svg>
<div class="t" style="left:649px;top:111px;font-size:8.5px;line-height:11px;color:#cfcfcf">H:</div>
<div class="a" style="left:663px;top:109px;width:41px;height:13px;background:#3c3c3c"></div>
<div class="t" style="left:665px;top:111px;width:39px;overflow:hidden;font-size:8.5px;line-height:11px;color:#e6e6e6;letter-spacing:-0.2px">11.11 英寸</div>
<div class="t" style="left:564px;top:134px;font-size:8.5px;line-height:11px;color:#cfcfcf">X:</div>
<div class="a" style="left:576px;top:132px;width:41px;height:13px;background:#3c3c3c"></div>
<div class="t" style="left:578px;top:134px;font-size:8.5px;line-height:11px;color:#e6e6e6">0 厘米</div>
<div class="t" style="left:651px;top:134px;font-size:8.5px;line-height:11px;color:#cfcfcf">Y:</div>
<div class="a" style="left:663px;top:132px;width:41px;height:13px;background:#3c3c3c"></div>
<div class="t" style="left:665px;top:134px;font-size:8.5px;line-height:11px;color:#e6e6e6">0 厘米</div>
<!-- layers panel -->
<div class="a" style="left:553px;top:315px;width:247px;height:21px;background:#424242"></div>
<div class="a" style="left:553px;top:315px;width:33px;height:21px;background:#535353"></div>
<div class="a" style="left:553px;top:336px;width:247px;height:237px;background:#535353"></div>
<!-- layers content -->
<div class="a" style="left:587px;top:316px;width:76px;height:19px;background:#474747"></div>
<div class="a" style="left:586px;top:315px;width:1px;height:21px;background:#3a3a3a"></div>
<div class="a" style="left:617px;top:316px;width:1px;height:19px;background:#404040"></div>
<div class="a" style="left:553px;top:335px;width:247px;height:1px;background:#3c3c3c"></div>
<div class="a" style="left:553px;top:315px;width:33px;height:21px;background:#535353"></div>
<div class="t" style="left:560px;top:320px;font-size:9px;line-height:12px;color:#efefef">图层</div>
<div class="t" style="left:592px;top:320px;font-size:9px;line-height:12px;color:#b4b4b4">通道</div>
<div class="t" style="left:625px;top:320px;font-size:9px;line-height:12px;color:#b4b4b4">历史记录</div>
<svg class="a" style="left:788px;top:323px" width="10" height="8" fill="#a8a8a8"><rect x="0" y="0" width="8" height="1.6"/><rect x="0" y="2.5" width="8" height="1.6"/><rect x="0" y="5" width="8" height="1.6"/></svg>
<div class="a" style="left:557px;top:343px;width:61px;height:15px;background:#424242"></div>
<svg class="a" style="left:562px;top:345px" width="9" height="10"><circle cx="3.8" cy="3.8" r="2.8" stroke="#eee" stroke-width="1.4" fill="none"/><path d="M5.8 5.8l2.5 2.8" stroke="#eee" stroke-width="1.6"/></svg>
<div class="t" style="left:572px;top:345px;font-size:9px;line-height:11px;color:#e6e6e6">类型</div>
<svg class="a" style="left:610px;top:348px" width="8" height="6"><path d="M1 1.5l3 3 3-3" stroke="#aaa" stroke-width="1.2" fill="none"/></svg>
<svg class="a" style="left:626px;top:342px" width="106" height="17" fill="none" stroke="#e0e0e0" stroke-width="1.2">
<rect x="4.5" y="3.5" width="9" height="8"/><path d="M5 11l3-3 2 2 2-2 2 3z" fill="#e0e0e0" stroke="none"/>
<circle cx="25.5" cy="7.5" r="4" fill="#e0e0e0" stroke="none"/><path d="M22.5 10.5l6-6" stroke="#535353" stroke-width="1.2"/>
<path d="M41 3.5h8M45 3.5v8.5M43 12h4" stroke-width="1.6"/>
<rect x="59.5" y="3.5" width="8" height="8"/><rect x="58" y="2" width="3" height="3" fill="#e0e0e0" stroke="none"/><rect x="66" y="2" width="3" height="3" fill="#e0e0e0" stroke="none"/><rect x="58" y="10" width="3" height="3" fill="#e0e0e0" stroke="none"/><rect x="66" y="10" width="3" height="3" fill="#e0e0e0" stroke="none"/>
<rect x="75" y="8" width="7" height="5" fill="#e0e0e0" stroke="none"/><path d="M76.5 8V6a2 2 0 0 1 4 0" /><path d="M80 3h2l2 2v8" stroke-width="1"/>
<circle cx="98.5" cy="4.5" r="3.5" fill="#e0e0e0" stroke="none"/><rect x="97.8" y="8" width="1.4" height="4" fill="#888" stroke="none"/>
</svg>
<div class="a" style="left:553px;top:360px;width:247px;height:1px;background:#474747"></div>
<div class="a" style="left:557px;top:364px;width:83px;height:15px;background:#424242"></div>
<div class="t" style="left:562px;top:366px;font-size:9px;line-height:11px;color:#e6e6e6">正常</div>
<svg class="a" style="left:632px;top:369px" width="8" height="6"><path d="M1 1.5l3 3 3-3" stroke="#aaa" stroke-width="1.2" fill="none"/></svg>
<div class="t" style="left:646px;top:366px;font-size:9px;line-height:11px;color:#e0e0e0">不透明度:</div>
<div class="a" style="left:688px;top:364px;width:28px;height:15px;background:#424242"></div>
<div class="t" style="left:691px;top:366px;font-size:8.5px;line-height:11px;color:#e6e6e6">100%</div>
<div class="a" style="left:717px;top:364px;width:11px;height:15px;background:#4a4a4a"></div>
<svg class="a" style="left:719px;top:369px" width="8" height="6"><path d="M1 1.5l3 3 3-3" stroke="#aaa" stroke-width="1.2" fill="none"/></svg>
<div class="a" style="left:553px;top:381px;width:247px;height:1px;background:#4a4a4a"></div>
<div class="t" style="left:558px;top:386px;font-size:9px;line-height:11px;color:#d8d8d8">锁定:</div>
<svg class="a" style="left:585px;top:384px" width="78" height="15" fill="none" stroke="#e0e0e0" stroke-width="1.2">
<rect x="2.5" y="2.5" width="8" height="8"/><rect x="2.5" y="2.5" width="4" height="4" fill="#e0e0e0" stroke="none"/><rect x="6.5" y="6.5" width="4" height="4" fill="#e0e0e0" stroke="none"/>
<path d="M25 2l-5 6" stroke-width="1.8"/><path d="M20 7c-1.5 0-3 1.5-3 4 2 0 4-1 4-3z" fill="#e0e0e0" stroke="none"/>
<path d="M36 1.5v11M30.5 7h11"/><path d="M34.5 3l1.5-2 1.5 2M34.5 11l1.5 2 1.5-2M32 5.5l-2 1.5 2 1.5M40 5.5l2 1.5-2 1.5" stroke-width="1"/>
<path d="M51 2v9h8M49 4h8v9" stroke-width="1.3"/>
<rect x="66" y="6.5" width="8" height="6" fill="#e0e0e0" stroke="none"/><path d="M67.5 6.5V5a2.5 2.5 0 0 1 5 0v1.5" stroke-width="1.4"/>
</svg>
<div class="t" style="left:664px;top:386px;font-size:9px;line-height:11px;color:#d8d8d8">填充:</div>
<div class="a" style="left:688px;top:384px;width:28px;height:15px;background:#424242"></div>
<div class="t" style="left:691px;top:386px;font-size:8.5px;line-height:11px;color:#e6e6e6">100%</div>
<div class="a" style="left:717px;top:384px;width:11px;height:15px;background:#4a4a4a"></div>
<svg class="a" style="left:719px;top:389px" width="8" height="6"><path d="M1 1.5l3 3 3-3" stroke="#aaa" stroke-width="1.2" fill="none"/></svg>
<div class="a" style="left:553px;top:401px;width:247px;height:1px;background:#474747"></div>
<div class="a" style="left:788px;top:402px;width:9px;height:150px;background:#4c4c4c"></div>
<!-- layer 1 -->
<svg class="a" style="left:558px;top:423px" width="13" height="9"><path d="M0.8 4.5C3 1 10 1 12.2 4.5 10 8 3 8 0.8 4.5z" fill="#e8e8e8"/><circle cx="6.5" cy="4.5" r="2" fill="#535353"/><circle cx="6.5" cy="4.5" r="0.9" fill="#e8e8e8"/></svg>
<svg class="a" style="left:579px;top:407px" width="40" height="40">
<defs><pattern id="ck" width="6" height="6" patternUnits="userSpaceOnUse"><rect width="6" height="6" fill="#fff"/><rect width="3" height="3" fill="#d9d9d9"/><rect x="3" y="3" width="3" height="3" fill="#d9d9d9"/></pattern></defs>
<rect width="40" height="40" fill="url(#ck)"/>
<g transform="scale(0.1375)"><path d="M244 334L244 231A20 20 0 0 1 284 231L284 270C293 266 306 269 312 281C322 276 337 283 342 295C363 297 373.5 314 373.5 337C373.5 357 362 374 351 390L348 420.5Q347 428.5 339 428.5L263 428.5Q257 428.5 254 422.5L239 388C236 380 232 375 225 371C212 362 195 354.5 183 349.5A18 18 0 0 1 198 318.6Z" transform="translate(-131,-176)" fill="#fdd5c5" stroke="#000" stroke-width="14" stroke-linejoin="round"/></g>
</svg>
<div class="t" style="left:625px;top:422px;font-size:9px;line-height:11px;color:#e6e6e6">图层<span style="margin-left:5px">1</span></div>
<div class="a" style="left:553px;top:450px;width:235px;height:1px;background:#4a4a4a"></div>
<div class="a" style="left:553px;top:451px;width:235px;height:46px;background:#696969"></div>
<svg class="a" style="left:558px;top:471px" width="13" height="9"><path d="M0.8 4.5C3 1 10 1 12.2 4.5 10 8 3 8 0.8 4.5z" fill="#e8e8e8"/><circle cx="6.5" cy="4.5" r="2" fill="#696969"/><circle cx="6.5" cy="4.5" r="0.9" fill="#e8e8e8"/></svg>
<div class="a" style="left:576px;top:452px;width:45px;height:45px;border:2px solid #c8c8c8"></div>
<div class="a" style="left:590px;top:452px;width:17px;height:2px;background:#7a7a7a"></div>
<div class="a" style="left:590px;top:495px;width:17px;height:2px;background:#7a7a7a"></div>
<div class="a" style="left:578px;top:454px;width:41px;height:41px;background:#2a2a2a"></div>
<div class="a" style="left:579px;top:455px;width:39px;height:39px;background:#fff"></div>
<div class="t" style="left:625px;top:470px;font-size:9px;line-height:11px;color:#e6e6e6">图层<span style="margin-left:5px">2</span></div>
<svg class="a" style="left:648px;top:557px" width="140" height="16" fill="none" stroke="#e0e0e0" stroke-width="1.2">
<rect x="4.6" y="5.6" width="5" height="4.5" rx="2.2" stroke="#8a8a8a"/><rect x="9" y="5.6" width="5" height="4.5" rx="2.2" stroke="#8a8a8a"/>
<text x="25" y="12" font-size="11" font-style="italic" fill="#e0e0e0" stroke="none" font-family="Liberation Serif">fx</text><circle cx="34.5" cy="14" r="0.8" fill="#e0e0e0" stroke="none"/>
<rect x="44" y="3.5" width="10" height="8" fill="#e0e0e0" stroke="none"/><circle cx="49" cy="7.5" r="2.5" fill="#535353" stroke="none"/>
<circle cx="68.5" cy="7.5" r="4" stroke-width="1.3"/><path d="M71.5 4.5L65.5 10.5A4 4 0 0 0 71.5 4.5z" fill="#e0e0e0" stroke="none"/><circle cx="72" cy="13.5" r="0.8" fill="#e0e0e0" stroke="none"/>
<path d="M85 4h3.5l1 1.2h5.5v6.8H85z" fill="#e0e0e0" stroke="none"/>
<path d="M106 3.5h6.5v7.5h-7.5v-5" stroke-width="1.2"/><rect x="105" y="7.5" width="3.5" height="3.5" fill="#e0e0e0" stroke="none"/>
<path d="M124.5 4h9M127 4V2.5h4V4M125.5 5v7.5h7V5M127.5 6.5v5M129.5 6.5v5M131.5 6.5v5" stroke-width="1"/>
</svg>
</body></html>
